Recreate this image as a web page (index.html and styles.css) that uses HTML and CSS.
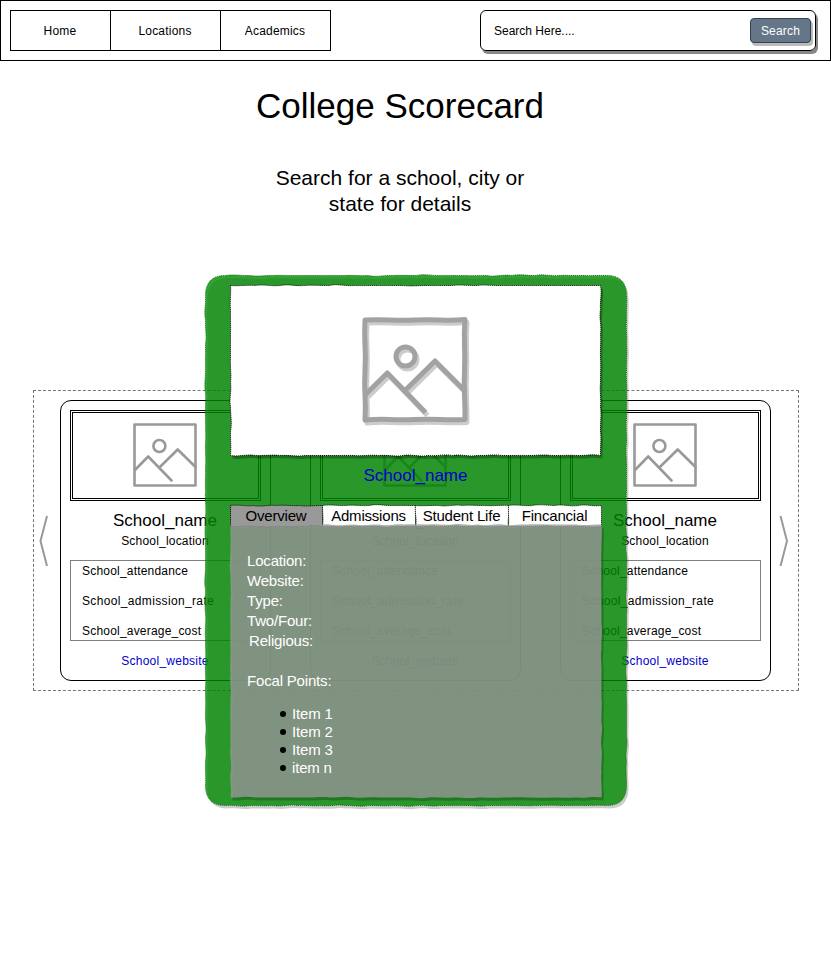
FILE: index.html
```html
<!DOCTYPE html>
<html lang="en">
<head>
<meta charset="utf-8">
<title>College Scorecard</title>
<link rel="stylesheet" href="styles.css">
</head>
<body>
<svg class="defs" width="0" height="0" aria-hidden="true">
  <symbol id="picture" viewBox="0 0 64 64">
    <g fill="none" stroke="#999" stroke-width="2.6" stroke-linecap="round" stroke-linejoin="round">
      <rect x="1.5" y="1.5" width="61" height="61"/>
      <circle cx="26.4" cy="23" r="6"/>
      <path d="M2 47L15.2 33.5L38.5 57.5M26.4 44.5L44.7 26.5L62.5 44"/>
    </g>
  </symbol>
</svg>
<header class="topbar">
  <nav class="nav"><a>Home</a><a>Locations</a><a>Academics</a></nav>
  <div class="search"><span>Search Here....</span><button class="search-btn">Search</button></div>
</header>
<main>
  <h1 class="title">College Scorecard</h1>
  <p class="subtitle">Search for a school, city or<br>state for details</p>
  <div class="stage">
    <section class="carousel">
      <svg class="chevron" viewBox="0 0 26 52"><path d="M13 1L6.5 26L13 51"/></svg>
      <div class="cards">
        <article class="card">
          <div class="thumb"><svg><use href="#picture"/></svg></div>
          <h2>School_name</h2><p class="place">School_location</p>
          <div class="stats"><p>School_attendance</p><p class="rate">School_admission_rate</p><p>School_average_cost</p></div>
          <a class="site">School_website</a>
        </article>
        <article class="card">
          <div class="thumb"><svg><use href="#picture"/></svg></div>
          <h2>School_name</h2><p class="place">School_location</p>
          <div class="stats"><p>School_attendance</p><p class="rate">School_admission_rate</p><p>School_average_cost</p></div>
          <a class="site">School_website</a>
        </article>
        <article class="card">
          <div class="thumb"><svg><use href="#picture"/></svg></div>
          <h2>School_name</h2><p class="place">School_location</p>
          <div class="stats"><p>School_attendance</p><p class="rate">School_admission_rate</p><p>School_average_cost</p></div>
          <a class="site">School_website</a>
        </article>
      </div>
      <svg class="chevron" viewBox="0 0 26 52"><path d="M9.5 1L16 26L9.5 51"/></svg>
    </section>
    <section class="modal rough" data-fill="#008a00" data-opacity=".8" data-shadow=".2" data-radius="20" data-line="#1c6a1c" data-seed="3">
      <div class="hero rough" data-fill="#fff" data-shadow=".27" data-line="#000" data-seed="8">
        <svg class="hero-icon" viewBox="0 0 110 110">
          <g class="ink shade" transform="translate(2 3)"><path d="M5 5Q17 4.300 30 5T55 5T80 5T105 4.500Q104 17 104.500 30T104.500 55T104.500 80T105 104.500Q92 105.200 80 104.500T55 104.500T30 104.500T5 105Q5.700 92 5 80T5 55T5 30T5 5Z"/><circle cx="45.500" cy="41.500" r="9.500"/><path d="M6 79L27.300 58L65.500 97.500M45.500 75L75 46L104 75"/></g>
          <g class="ink"><path d="M5 5Q17 4.300 30 5T55 5T80 5T105 4.500Q104 17 104.500 30T104.500 55T104.500 80T105 104.500Q92 105.200 80 104.500T55 104.500T30 104.500T5 105Q5.700 92 5 80T5 55T5 30T5 5Z"/><circle cx="45.500" cy="41.500" r="9.500"/><path d="M6 79L27.300 58L65.500 97.500M45.500 75L75 46L104 75"/></g>
        </svg>
      </div>
      <a class="modal-name">School_name</a>
      <div class="tabs">
        <div class="tab rough" data-fill="#999" data-line="#000" data-seed="5"><span>Overview</span></div>
        <div class="tab rough" data-fill="#fff" data-line="#000" data-seed="9"><span>Admissions</span></div>
        <div class="tab rough" data-fill="#fff" data-line="#000" data-seed="4"><span>Student Life</span></div>
        <div class="tab rough" data-fill="#fff" data-line="#000" data-seed="7"><span>Fincancial</span></div>
      </div>
      <div class="details rough" data-fill="#999" data-opacity=".8" data-shadow=".2" data-line="none" data-seed="6">
        <p>Location:</p><p>Website:</p><p>Type:</p><p>Two/Four:</p><p class="nudge">Religious:</p>
        <p class="focal">Focal Points:</p>
        <ul><li>Item 1</li><li>Item 2</li><li>Item 3</li><li>item n</li></ul>
      </div>
    </section>
  </div>
</main>
<script src="rough.js"></script>
</body>
</html>
```
FILE: styles.css
```css
* { box-sizing: border-box; }
body { margin: 0; width: 831px; height: 961px; overflow: hidden; background: #fff; color: #000; font: 12px/20px "Liberation Sans", Arial, sans-serif; }
h1, h2, p, ul { margin: 0; padding: 0; font-weight: 400; }
.defs { position: absolute; }
.topbar { display: flex; justify-content: space-between; align-items: flex-start; height: 61px; padding: 9px 14px 9px 9px; border: 1px solid #000; }
.nav { display: flex; height: 41px; border: 1px solid #000; line-height: 40px; text-align: center; letter-spacing: .2px; }
.nav a { width: 110px; padding-right: 1px; border-right: 1px solid #000; }
.nav a:first-child { width: 100px; }
.nav a:last-child { width: 109px; border: 0; }
.search { display: flex; justify-content: space-between; align-items: center; width: 336px; height: 41px; padding: 0 4px 0 13px; border: 1px solid #000; border-radius: 6px; box-shadow: 2px 3px 0 #888; }
.search-btn { width: 61px; height: 25px; padding: 0; border: 1px solid #314354; border-radius: 4px; background: #647687; color: #fff; font: inherit; letter-spacing: .2px; box-shadow: 2px 3px 0 #bbb; }
.title { width: 800px; margin-top: 24px; font-size: 35px; line-height: 42px; text-align: center; }
.subtitle { width: 800px; margin-top: 38px; font-size: 21px; line-height: 26px; text-align: center; }
.stage { position: relative; padding: 173px 0 0 33px; }
.carousel { display: flex; align-items: center; width: 766px; height: 301px; border: 1px dashed #777; }
.chevron { width: 26px; height: 52px; flex: none; fill: none; stroke: #999; stroke-width: 2; }
.cards { display: flex; gap: 39px; }
.card { width: 211px; height: 281px; padding: 9px; border: 1px solid #000; border-radius: 11px; text-align: center; }
.thumb { display: flex; align-items: center; justify-content: center; height: 91px; padding: 0 1px 1px 0; border: 3px double #000; }
.thumb svg { width: 64px; height: 64px; }
.card h2 { margin-top: 9px; padding-right: 1px; font-size: 17px; line-height: 21px; }
.place { padding-right: 1px; letter-spacing: .2px; }
.stats { height: 81px; margin-top: 9px; padding-left: 11px; border: 1px solid #808080; text-align: left; letter-spacing: .2px; }
.stats p + p { margin-top: 10px; }
.stats .rate { letter-spacing: .35px; }
.site { display: block; margin-top: 10px; padding-right: 1px; color: #0000cc; letter-spacing: .25px; }
.rough { position: relative; }
.outline { position: absolute; left: 0; top: 0; width: 100%; height: 100%; overflow: visible; z-index: -1; }
.modal { position: absolute; isolation: isolate; left: 205px; top: 58px; width: 422px; height: 530px; padding: 10px 26px 8px 25px; }
.hero { isolation: isolate; display: flex; justify-content: center; height: 170px; padding: 30px 1px 0 0; }
.hero-icon { width: 110px; height: 110px; overflow: visible; }
.ink { fill: none; stroke: #a2a2a2; stroke-width: 5; stroke-linejoin: round; }
.shade { stroke: #ccc; }
.modal-name { display: block; height: 50px; line-height: 41px; font-size: 17px; text-align: center; color: #0000cc; }
.tabs { display: grid; grid-template-columns: 92px 93px 93px 93px; height: 19px; font-size: 15px; line-height: 21px; text-align: center; white-space: nowrap; letter-spacing: -.2px; }
.tab { isolation: isolate; }
.details { isolation: isolate; width: 372px; height: 273px; margin-top: 0; padding: 27px 17px 0; color: #fff; font-size: 15px; line-height: 20px; letter-spacing: -.18px; }
.nudge { padding-left: 2px; }
.focal { margin-top: 20px; }
.details ul { margin-top: 14px; padding-left: 46px; line-height: 18px; list-style: none; }
.details li { display: flex; align-items: center; }
.details li::before { content: ""; width: 6px; height: 6px; margin: 0 6px 0 -13px; border-radius: 50%; background: #000; }
```
FILE: rough.js
```js
// Draws a hand-sketched outline behind every .rough element.
const NS = 'http://www.w3.org/2000/svg';

function wobblyRect(w, h, r, seed) {
  const rand = () => (seed = (seed * 16807 + 11) % 2147483647) / 2147483647;
  for (let i = 0; i < 5; i++) rand();
  const side = (x1, y1, x2, y2) => {
    const n = Math.max(1, Math.round(Math.hypot(x2 - x1, y2 - y1) / 24));
    let d = '';
    for (let i = 1; i <= n; i++) {
      const at = (t, j) => `${x1 + (x2 - x1) * t + (x1 === x2 ? j : 0)} ${y1 + (y2 - y1) * t + (y1 === y2 ? j : 0)}`;
      const j = (rand() - 0.5) * 4;
      d += `C${at((i - 0.65) / n, j)} ${at((i - 0.35) / n, -j * rand())} ${at(i / n, 0)}`;
    }
    return d;
  };
  return `M${r} 0` + side(r, 0, w - r, 0) + `Q${w} 0 ${w} ${r}` + side(w, r, w, h - r) +
    `Q${w} ${h} ${w - r} ${h}` + side(w - r, h, r, h) + `Q0 ${h} 0 ${h - r}` + side(0, h - r, 0, r) + `Q0 0 ${r} 0Z`;
}

document.querySelectorAll('.rough').forEach(el => {
  const o = el.dataset;
  const svg = document.createElementNS(NS, 'svg');
  svg.setAttribute('class', 'outline');
  const tab = el.classList.contains('tab');
  const d = wobblyRect(el.offsetWidth - (tab ? 0 : 1), el.offsetHeight, +(o.radius || 0), +o.seed * 98765);
  const add = attrs => {
    const p = document.createElementNS(NS, 'path');
    p.setAttribute('d', d);
    for (const k in attrs) p.setAttribute(k, attrs[k]);
    svg.append(p);
  };
  if (o.shadow) add({ fill: '#000', 'fill-opacity': o.shadow, transform: 'translate(2.5 3.5)' });
  add({ fill: o.fill, 'fill-opacity': o.opacity || 1, transform: 'translate(.5 .5)' });
  add({ fill: 'none', stroke: o.line, 'stroke-width': 1, 'stroke-dasharray': '1 1', transform: 'translate(.5 .5)' });
  el.prepend(svg);
});
```
